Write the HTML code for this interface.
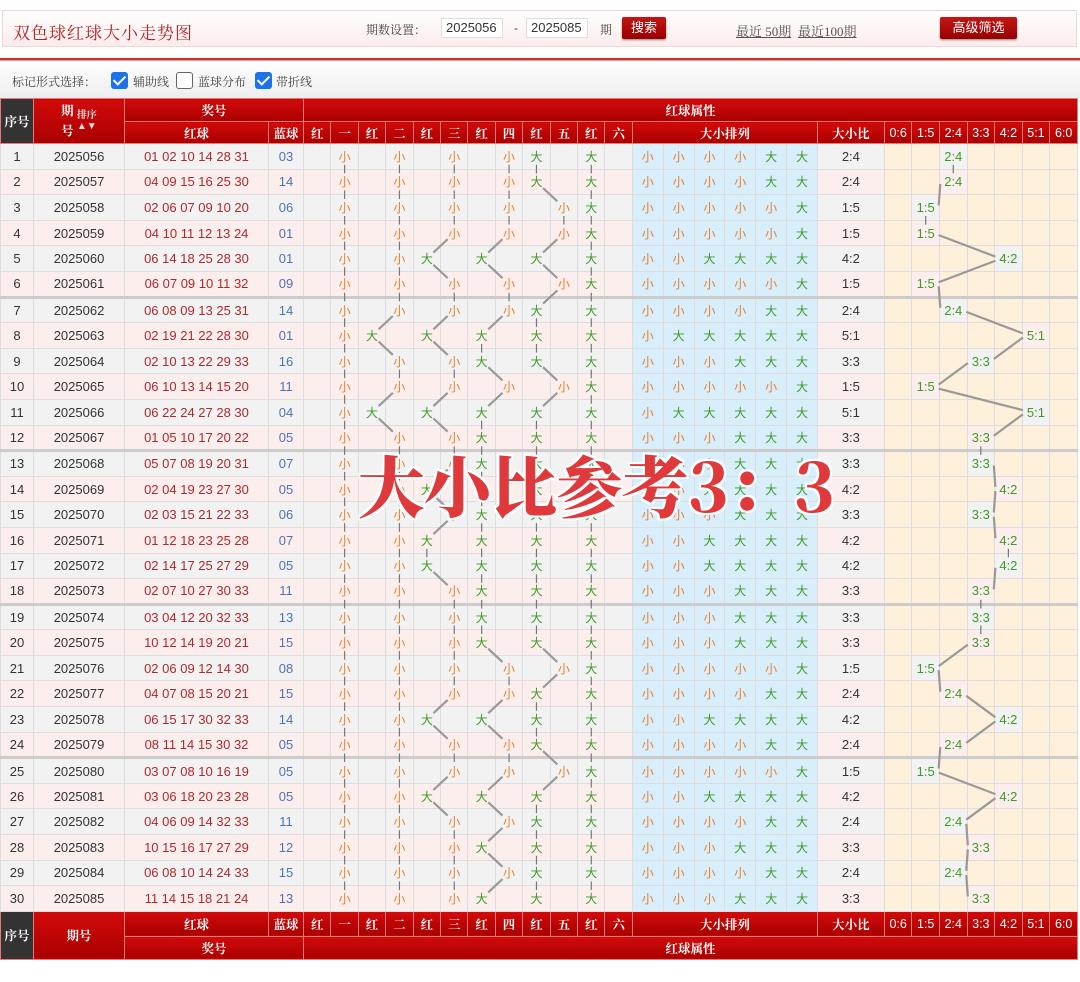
<!DOCTYPE html>
<html><head><meta charset="utf-8">
<style>
*{margin:0;padding:0;box-sizing:border-box}
body{width:1080px;height:982px;background:#fff;position:relative;overflow:hidden;font-family:"Liberation Sans","Noto Sans CJK SC",sans-serif;}
.serif{font-family:"Liberation Serif","Noto Serif CJK SC",serif}
#top{position:absolute;left:2px;top:10px;width:1075px;height:37px;border:1px solid #f1d6d6;background:linear-gradient(#fff,#fcecec);}
#title{position:absolute;left:10px;top:8px;font-size:17px;color:#b32323;letter-spacing:1px}
.lab{position:absolute;top:10px;font-size:12px;color:#444}
.inp{position:absolute;top:7px;width:62px;height:20px;border:1px solid #ddd;background:#fff;font-size:13px;color:#333;padding-left:4px;line-height:18px}
.btn{position:absolute;top:6px;height:22px;background:linear-gradient(#c41515,#900);color:#fff;font-size:13px;text-align:center;line-height:21px;border-radius:2px;box-shadow:0 1px 2px #888}
.lnk{position:absolute;top:10px;font-size:13px;color:#555;text-decoration:underline}
#rline{position:absolute;left:0;top:58px;width:1080px;height:3px;background:#c83030;border-bottom:1px solid #e8a0a0}
#opt{position:absolute;left:0;top:62px;width:1080px;height:36px;background:linear-gradient(#fff,#ededed);font-size:12px;color:#444}
.cb{position:absolute;top:10px;width:17px;height:17px;border-radius:3px}
.cb.on{background:#1a73e8}
.cb.off{border:1.5px solid #666;background:#fff}
.cb.on:after{content:"";position:absolute;left:5px;top:1px;width:5px;height:10px;border:solid #fff;border-width:0 2.5px 2.5px 0;transform:rotate(45deg)}
table{position:absolute;left:0;top:98px;width:1077px;border-collapse:collapse;table-layout:fixed}
td,th{text-align:center;vertical-align:middle;white-space:nowrap;overflow:hidden}
thead td,tfoot td{background:linear-gradient(#d30a0a,#a80000);color:#fff;font-family:"Liberation Serif","Noto Serif CJK SC",serif;font-size:12.5px;border:1px solid #e77;font-weight:bold}
td.dk{background:#333 !important;}
tbody td{border:1px solid #ddd;font-size:13px;color:#333;height:25.6px}
tbody tr{height:25.6px}
tr.o td{background:#f2f2f2}
tr.e td{background:#fdeeee}
tr.t td{border-top:3px solid #ccc}
td.r{color:#b0282c}
td.b{color:#4e72b8}
td.s{color:#e8802e;font-size:12px}
td.g{color:#3d9a25;font-size:12px}
tr td.q{background:#d8eefb;color:#e8802e;font-size:12px}
tr td.h{background:#d8eefb;color:#3d9a25;font-size:12px}
tr td.z{background:#fff0db}
td.v{color:#3d9a25;font-size:13px}
#wm{position:absolute;left:358px;top:436px;font-size:67px;font-weight:900;color:#e0393b;font-family:"Noto Serif CJK SC",serif;white-space:nowrap;letter-spacing:-1px;
text-shadow:2px 0 #fff,-2px 0 #fff,0 2px #fff,0 -2px #fff,2px 2px #fff,-2px -2px #fff,2px -2px #fff,-2px 2px #fff;z-index:5}
svg#ln{position:absolute;left:0;top:0;z-index:3}
</style></head><body>
<div id="top">
<div id="title" class="serif">双色球红球大小走势图</div>
<div class="lab serif" style="left:363px">期数设置：</div>
<div class="inp" style="left:438px">2025056</div>
<div class="lab" style="left:511px">-</div>
<div class="inp" style="left:523px">2025085</div>
<div class="lab serif" style="left:597px">期</div>
<div class="btn" style="left:619px;width:44px">搜索</div>
<div class="lnk serif" style="left:733px">最近 50期</div>
<div class="lnk serif" style="left:795px">最近100期</div>
<div class="btn" style="left:937px;width:77px">高级筛选</div>
</div>
<div id="rline"></div>
<div id="opt">
<div class="serif" style="position:absolute;left:12px;top:11px">标记形式选择：</div>
<div class="cb on" style="left:111px"></div><div class="serif" style="position:absolute;left:133px;top:11px">辅助线</div>
<div class="cb off" style="left:176px"></div><div class="serif" style="position:absolute;left:198px;top:11px">蓝球分布</div>
<div class="cb on" style="left:255px"></div><div class="serif" style="position:absolute;left:276px;top:11px">带折线</div>
</div>

<table id="tb">
<colgroup><col style="width:33px"><col style="width:91px"><col style="width:144px"><col style="width:35px">
<col style="width:27.42px"><col style="width:27.42px"><col style="width:27.42px"><col style="width:27.42px"><col style="width:27.42px"><col style="width:27.42px"><col style="width:27.42px"><col style="width:27.42px"><col style="width:27.42px"><col style="width:27.42px"><col style="width:27.42px"><col style="width:27.42px">
<col style="width:30.83px"><col style="width:30.83px"><col style="width:30.83px"><col style="width:30.83px"><col style="width:30.83px"><col style="width:30.83px">
<col style="width:67px">
<col style="width:27.57px"><col style="width:27.57px"><col style="width:27.57px"><col style="width:27.57px"><col style="width:27.57px"><col style="width:27.57px"><col style="width:27.57px"></colgroup>
<thead>
<tr style="height:23px"><td rowspan="2" class="dk">序号</td><td rowspan="2"><span style="display:inline-block;vertical-align:middle;line-height:20px">期<br>号</span> <span style="display:inline-block;vertical-align:middle;font-size:10px;line-height:11px;color:#fdd">排序<br>▲▼</span></td><td colspan="2">奖号</td><td colspan="26">红球属性</td></tr>
<tr style="height:22px"><td>红球</td><td>蓝球</td><td>红</td><td>一</td><td>红</td><td>二</td><td>红</td><td>三</td><td>红</td><td>四</td><td>红</td><td>五</td><td>红</td><td>六</td><td colspan="6">大小排列</td><td>大小比</td><td style="font-family:'Liberation Sans',sans-serif;font-weight:normal">0:6</td><td style="font-family:'Liberation Sans',sans-serif;font-weight:normal">1:5</td><td style="font-family:'Liberation Sans',sans-serif;font-weight:normal">2:4</td><td style="font-family:'Liberation Sans',sans-serif;font-weight:normal">3:3</td><td style="font-family:'Liberation Sans',sans-serif;font-weight:normal">4:2</td><td style="font-family:'Liberation Sans',sans-serif;font-weight:normal">5:1</td><td style="font-family:'Liberation Sans',sans-serif;font-weight:normal">6:0</td></tr>
</thead>
<tbody>
<tr class="o"><td>1<td>2025056<td class=r>01 02 10 14 28 31<td class=b>03<td><td class=s>小<td><td class=s>小<td><td class=s>小<td><td class=s>小<td class=g>大<td><td class=g>大<td><td class=q>小<td class=q>小<td class=q>小<td class=q>小<td class=h>大<td class=h>大<td>2:4<td class=z><td class=z><td class=v>2:4<td class=z><td class=z><td class=z><td class=z></tr>
<tr class="e"><td>2<td>2025057<td class=r>04 09 15 16 25 30<td class=b>14<td><td class=s>小<td><td class=s>小<td><td class=s>小<td><td class=s>小<td class=g>大<td><td class=g>大<td><td class=q>小<td class=q>小<td class=q>小<td class=q>小<td class=h>大<td class=h>大<td>2:4<td class=z><td class=z><td class=v>2:4<td class=z><td class=z><td class=z><td class=z></tr>
<tr class="o"><td>3<td>2025058<td class=r>02 06 07 09 10 20<td class=b>06<td><td class=s>小<td><td class=s>小<td><td class=s>小<td><td class=s>小<td><td class=s>小<td class=g>大<td><td class=q>小<td class=q>小<td class=q>小<td class=q>小<td class=q>小<td class=h>大<td>1:5<td class=z><td class=v>1:5<td class=z><td class=z><td class=z><td class=z><td class=z></tr>
<tr class="e"><td>4<td>2025059<td class=r>04 10 11 12 13 24<td class=b>01<td><td class=s>小<td><td class=s>小<td><td class=s>小<td><td class=s>小<td><td class=s>小<td class=g>大<td><td class=q>小<td class=q>小<td class=q>小<td class=q>小<td class=q>小<td class=h>大<td>1:5<td class=z><td class=v>1:5<td class=z><td class=z><td class=z><td class=z><td class=z></tr>
<tr class="o"><td>5<td>2025060<td class=r>06 14 18 25 28 30<td class=b>01<td><td class=s>小<td><td class=s>小<td class=g>大<td><td class=g>大<td><td class=g>大<td><td class=g>大<td><td class=q>小<td class=q>小<td class=h>大<td class=h>大<td class=h>大<td class=h>大<td>4:2<td class=z><td class=z><td class=z><td class=z><td class=v>4:2<td class=z><td class=z></tr>
<tr class="e"><td>6<td>2025061<td class=r>06 07 09 10 11 32<td class=b>09<td><td class=s>小<td><td class=s>小<td><td class=s>小<td><td class=s>小<td><td class=s>小<td class=g>大<td><td class=q>小<td class=q>小<td class=q>小<td class=q>小<td class=q>小<td class=h>大<td>1:5<td class=z><td class=v>1:5<td class=z><td class=z><td class=z><td class=z><td class=z></tr>
<tr class="o t"><td>7<td>2025062<td class=r>06 08 09 13 25 31<td class=b>14<td><td class=s>小<td><td class=s>小<td><td class=s>小<td><td class=s>小<td class=g>大<td><td class=g>大<td><td class=q>小<td class=q>小<td class=q>小<td class=q>小<td class=h>大<td class=h>大<td>2:4<td class=z><td class=z><td class=v>2:4<td class=z><td class=z><td class=z><td class=z></tr>
<tr class="e"><td>8<td>2025063<td class=r>02 19 21 22 28 30<td class=b>01<td><td class=s>小<td class=g>大<td><td class=g>大<td><td class=g>大<td><td class=g>大<td><td class=g>大<td><td class=q>小<td class=h>大<td class=h>大<td class=h>大<td class=h>大<td class=h>大<td>5:1<td class=z><td class=z><td class=z><td class=z><td class=z><td class=v>5:1<td class=z></tr>
<tr class="o"><td>9<td>2025064<td class=r>02 10 13 22 29 33<td class=b>16<td><td class=s>小<td><td class=s>小<td><td class=s>小<td class=g>大<td><td class=g>大<td><td class=g>大<td><td class=q>小<td class=q>小<td class=q>小<td class=h>大<td class=h>大<td class=h>大<td>3:3<td class=z><td class=z><td class=z><td class=v>3:3<td class=z><td class=z><td class=z></tr>
<tr class="e"><td>10<td>2025065<td class=r>06 10 13 14 15 20<td class=b>11<td><td class=s>小<td><td class=s>小<td><td class=s>小<td><td class=s>小<td><td class=s>小<td class=g>大<td><td class=q>小<td class=q>小<td class=q>小<td class=q>小<td class=q>小<td class=h>大<td>1:5<td class=z><td class=v>1:5<td class=z><td class=z><td class=z><td class=z><td class=z></tr>
<tr class="o"><td>11<td>2025066<td class=r>06 22 24 27 28 30<td class=b>04<td><td class=s>小<td class=g>大<td><td class=g>大<td><td class=g>大<td><td class=g>大<td><td class=g>大<td><td class=q>小<td class=h>大<td class=h>大<td class=h>大<td class=h>大<td class=h>大<td>5:1<td class=z><td class=z><td class=z><td class=z><td class=z><td class=v>5:1<td class=z></tr>
<tr class="e"><td>12<td>2025067<td class=r>01 05 10 17 20 22<td class=b>05<td><td class=s>小<td><td class=s>小<td><td class=s>小<td class=g>大<td><td class=g>大<td><td class=g>大<td><td class=q>小<td class=q>小<td class=q>小<td class=h>大<td class=h>大<td class=h>大<td>3:3<td class=z><td class=z><td class=z><td class=v>3:3<td class=z><td class=z><td class=z></tr>
<tr class="o t"><td>13<td>2025068<td class=r>05 07 08 19 20 31<td class=b>07<td><td class=s>小<td><td class=s>小<td><td class=s>小<td class=g>大<td><td class=g>大<td><td class=g>大<td><td class=q>小<td class=q>小<td class=q>小<td class=h>大<td class=h>大<td class=h>大<td>3:3<td class=z><td class=z><td class=z><td class=v>3:3<td class=z><td class=z><td class=z></tr>
<tr class="e"><td>14<td>2025069<td class=r>02 04 19 23 27 30<td class=b>05<td><td class=s>小<td><td class=s>小<td class=g>大<td><td class=g>大<td><td class=g>大<td><td class=g>大<td><td class=q>小<td class=q>小<td class=h>大<td class=h>大<td class=h>大<td class=h>大<td>4:2<td class=z><td class=z><td class=z><td class=z><td class=v>4:2<td class=z><td class=z></tr>
<tr class="o"><td>15<td>2025070<td class=r>02 03 15 21 22 33<td class=b>06<td><td class=s>小<td><td class=s>小<td><td class=s>小<td class=g>大<td><td class=g>大<td><td class=g>大<td><td class=q>小<td class=q>小<td class=q>小<td class=h>大<td class=h>大<td class=h>大<td>3:3<td class=z><td class=z><td class=z><td class=v>3:3<td class=z><td class=z><td class=z></tr>
<tr class="e"><td>16<td>2025071<td class=r>01 12 18 23 25 28<td class=b>07<td><td class=s>小<td><td class=s>小<td class=g>大<td><td class=g>大<td><td class=g>大<td><td class=g>大<td><td class=q>小<td class=q>小<td class=h>大<td class=h>大<td class=h>大<td class=h>大<td>4:2<td class=z><td class=z><td class=z><td class=z><td class=v>4:2<td class=z><td class=z></tr>
<tr class="o"><td>17<td>2025072<td class=r>02 14 17 25 27 29<td class=b>05<td><td class=s>小<td><td class=s>小<td class=g>大<td><td class=g>大<td><td class=g>大<td><td class=g>大<td><td class=q>小<td class=q>小<td class=h>大<td class=h>大<td class=h>大<td class=h>大<td>4:2<td class=z><td class=z><td class=z><td class=z><td class=v>4:2<td class=z><td class=z></tr>
<tr class="e"><td>18<td>2025073<td class=r>02 07 10 27 30 33<td class=b>11<td><td class=s>小<td><td class=s>小<td><td class=s>小<td class=g>大<td><td class=g>大<td><td class=g>大<td><td class=q>小<td class=q>小<td class=q>小<td class=h>大<td class=h>大<td class=h>大<td>3:3<td class=z><td class=z><td class=z><td class=v>3:3<td class=z><td class=z><td class=z></tr>
<tr class="o t"><td>19<td>2025074<td class=r>03 04 12 20 32 33<td class=b>13<td><td class=s>小<td><td class=s>小<td><td class=s>小<td class=g>大<td><td class=g>大<td><td class=g>大<td><td class=q>小<td class=q>小<td class=q>小<td class=h>大<td class=h>大<td class=h>大<td>3:3<td class=z><td class=z><td class=z><td class=v>3:3<td class=z><td class=z><td class=z></tr>
<tr class="e"><td>20<td>2025075<td class=r>10 12 14 19 20 21<td class=b>15<td><td class=s>小<td><td class=s>小<td><td class=s>小<td class=g>大<td><td class=g>大<td><td class=g>大<td><td class=q>小<td class=q>小<td class=q>小<td class=h>大<td class=h>大<td class=h>大<td>3:3<td class=z><td class=z><td class=z><td class=v>3:3<td class=z><td class=z><td class=z></tr>
<tr class="o"><td>21<td>2025076<td class=r>02 06 09 12 14 30<td class=b>08<td><td class=s>小<td><td class=s>小<td><td class=s>小<td><td class=s>小<td><td class=s>小<td class=g>大<td><td class=q>小<td class=q>小<td class=q>小<td class=q>小<td class=q>小<td class=h>大<td>1:5<td class=z><td class=v>1:5<td class=z><td class=z><td class=z><td class=z><td class=z></tr>
<tr class="e"><td>22<td>2025077<td class=r>04 07 08 15 20 21<td class=b>15<td><td class=s>小<td><td class=s>小<td><td class=s>小<td><td class=s>小<td class=g>大<td><td class=g>大<td><td class=q>小<td class=q>小<td class=q>小<td class=q>小<td class=h>大<td class=h>大<td>2:4<td class=z><td class=z><td class=v>2:4<td class=z><td class=z><td class=z><td class=z></tr>
<tr class="o"><td>23<td>2025078<td class=r>06 15 17 30 32 33<td class=b>14<td><td class=s>小<td><td class=s>小<td class=g>大<td><td class=g>大<td><td class=g>大<td><td class=g>大<td><td class=q>小<td class=q>小<td class=h>大<td class=h>大<td class=h>大<td class=h>大<td>4:2<td class=z><td class=z><td class=z><td class=z><td class=v>4:2<td class=z><td class=z></tr>
<tr class="e"><td>24<td>2025079<td class=r>08 11 14 15 30 32<td class=b>05<td><td class=s>小<td><td class=s>小<td><td class=s>小<td><td class=s>小<td class=g>大<td><td class=g>大<td><td class=q>小<td class=q>小<td class=q>小<td class=q>小<td class=h>大<td class=h>大<td>2:4<td class=z><td class=z><td class=v>2:4<td class=z><td class=z><td class=z><td class=z></tr>
<tr class="o t"><td>25<td>2025080<td class=r>03 07 08 10 16 19<td class=b>05<td><td class=s>小<td><td class=s>小<td><td class=s>小<td><td class=s>小<td><td class=s>小<td class=g>大<td><td class=q>小<td class=q>小<td class=q>小<td class=q>小<td class=q>小<td class=h>大<td>1:5<td class=z><td class=v>1:5<td class=z><td class=z><td class=z><td class=z><td class=z></tr>
<tr class="e"><td>26<td>2025081<td class=r>03 06 18 20 23 28<td class=b>05<td><td class=s>小<td><td class=s>小<td class=g>大<td><td class=g>大<td><td class=g>大<td><td class=g>大<td><td class=q>小<td class=q>小<td class=h>大<td class=h>大<td class=h>大<td class=h>大<td>4:2<td class=z><td class=z><td class=z><td class=z><td class=v>4:2<td class=z><td class=z></tr>
<tr class="o"><td>27<td>2025082<td class=r>04 06 09 14 32 33<td class=b>11<td><td class=s>小<td><td class=s>小<td><td class=s>小<td><td class=s>小<td class=g>大<td><td class=g>大<td><td class=q>小<td class=q>小<td class=q>小<td class=q>小<td class=h>大<td class=h>大<td>2:4<td class=z><td class=z><td class=v>2:4<td class=z><td class=z><td class=z><td class=z></tr>
<tr class="e"><td>28<td>2025083<td class=r>10 15 16 17 27 29<td class=b>12<td><td class=s>小<td><td class=s>小<td><td class=s>小<td class=g>大<td><td class=g>大<td><td class=g>大<td><td class=q>小<td class=q>小<td class=q>小<td class=h>大<td class=h>大<td class=h>大<td>3:3<td class=z><td class=z><td class=z><td class=v>3:3<td class=z><td class=z><td class=z></tr>
<tr class="o"><td>29<td>2025084<td class=r>06 08 10 14 24 33<td class=b>15<td><td class=s>小<td><td class=s>小<td><td class=s>小<td><td class=s>小<td class=g>大<td><td class=g>大<td><td class=q>小<td class=q>小<td class=q>小<td class=q>小<td class=h>大<td class=h>大<td>2:4<td class=z><td class=z><td class=v>2:4<td class=z><td class=z><td class=z><td class=z></tr>
<tr class="e"><td>30<td>2025085<td class=r>11 14 15 18 21 24<td class=b>13<td><td class=s>小<td><td class=s>小<td><td class=s>小<td class=g>大<td><td class=g>大<td><td class=g>大<td><td class=q>小<td class=q>小<td class=q>小<td class=h>大<td class=h>大<td class=h>大<td>3:3<td class=z><td class=z><td class=z><td class=v>3:3<td class=z><td class=z><td class=z></tr>
</tbody>
<tfoot>
<tr style="height:25px"><td rowspan="2" class="dk">序号</td><td rowspan="2">期号</td><td>红球</td><td>蓝球</td><td>红</td><td>一</td><td>红</td><td>二</td><td>红</td><td>三</td><td>红</td><td>四</td><td>红</td><td>五</td><td>红</td><td>六</td><td colspan="6">大小排列</td><td>大小比</td><td style="font-family:'Liberation Sans',sans-serif;font-weight:normal">0:6</td><td style="font-family:'Liberation Sans',sans-serif;font-weight:normal">1:5</td><td style="font-family:'Liberation Sans',sans-serif;font-weight:normal">2:4</td><td style="font-family:'Liberation Sans',sans-serif;font-weight:normal">3:3</td><td style="font-family:'Liberation Sans',sans-serif;font-weight:normal">4:2</td><td style="font-family:'Liberation Sans',sans-serif;font-weight:normal">5:1</td><td style="font-family:'Liberation Sans',sans-serif;font-weight:normal">6:0</td></tr>
<tr style="height:23px"><td colspan="2">奖号</td><td colspan="26">红球属性</td></tr>
</tfoot>
</table>
<svg id="ln" width="1080" height="982"></svg>
<div id="wm">大小比参考3：3</div>
<script>
(function(){
var svg=document.getElementById('ln'),ns='http://www.w3.org/2000/svg';
var rows=document.querySelectorAll('#tb tbody tr');
function c(td){var r=td.getBoundingClientRect();return [r.left+r.width/2,r.top+r.height/2];}
function line(a,b,sh,sv){var dx=b[0]-a[0],dy=b[1]-a[1],L=Math.sqrt(dx*dx+dy*dy);var s=dx===0?sv:sh;var ux=dx/L,uy=dy/L;
var l=document.createElementNS(ns,'line');l.setAttribute('x1',a[0]+ux*s);l.setAttribute('y1',a[1]+uy*s);l.setAttribute('x2',b[0]-ux*s);l.setAttribute('y2',b[1]-uy*s);
l.setAttribute('stroke',dx===0?'#777':'#999');l.setAttribute('stroke-width',dx===0?1.2:2.2);svg.appendChild(l);}
function pts(tr){var t=tr.children,p=[];for(var i=0;i<6;i++){var a=t[4+2*i],b=t[5+2*i];p.push(c(a.textContent?a:b));}
var d;for(var k=23;k<30;k++){if(t[k].textContent)d=c(t[k]);}return {p:p,d:d};}
var P=[];for(var i=0;i<rows.length;i++)P.push(pts(rows[i]));
for(var i=0;i<P.length-1;i++){for(var j=0;j<6;j++)line(P[i].p[j],P[i+1].p[j],9,8.5);
var a=P[i].d,b=P[i+1].d;if(a[0]===b[0])line(a,b,9,8.5);else{var dx=b[0]-a[0],dy=b[1]-a[1];
var l=document.createElementNS(ns,'line');var sx=dx>0?1:-1;l.setAttribute('x1',a[0]+sx*13);l.setAttribute('y1',a[1]+dy*0.08);l.setAttribute('x2',b[0]-sx*13);l.setAttribute('y2',b[1]-dy*0.08);l.setAttribute('stroke','#999');l.setAttribute('stroke-width',2.2);svg.appendChild(l);}}
})();
</script>
</body></html>
